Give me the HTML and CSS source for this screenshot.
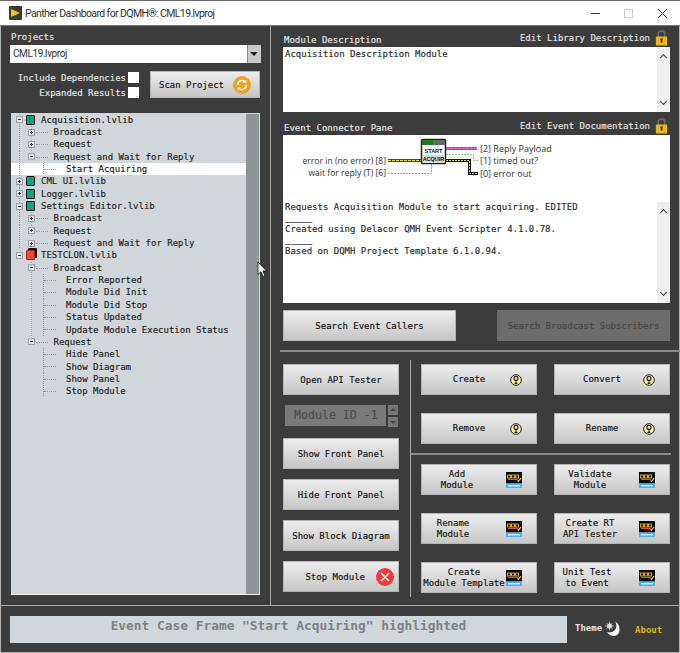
FILE: index.html
```html
<!DOCTYPE html>
<html lang="en">
<head>
  <meta charset="UTF-8">
  <title>Panther Dashboard for DQMH</title>
  <link rel="stylesheet" href="styles.css">
</head>
<body>

<svg class="defs">
  <symbol id="help" viewBox="0 0 12 12">
    <circle cx="6" cy="6" r="5.3" fill="#f3f0a8" stroke="#222" stroke-width="1"/>
    <circle cx="6" cy="4.4" r="2" fill="none" stroke="#222" stroke-width="1.1"/>
    <path d="M6 6.4V9.4M4.6 9.4H7.4" stroke="#222" stroke-width="1.1" fill="none"/>
  </symbol>
  <symbol id="dqmh" viewBox="0 0 16 16">
    <rect width="16" height="11.500" fill="#050505"/>
    <path d="M1.500 3H4.500V6H1.500ZM5.500 3H8.500V6H5.500ZM9.500 3H12.500V6H9.500Z" fill="none" stroke="#d9a520" stroke-width="1.100"/>
    <path d="M2 7.500H11L13 9.500" stroke="#e2502a" stroke-width="1.200" fill="none"/>
    <path d="M12 10L15 6" stroke="#f0d040" stroke-width="1.200"/>
    <rect y="11.500" width="16" height="4.500" fill="#4db0f0"/>
    <rect x="2" y="13" width="12" height="1.400" fill="#d8eefc"/>
  </symbol>
  <symbol id="lock" viewBox="0 0 13 18">
    <path d="M3 9V5.500a3.500 3.500 0 0 1 7 0V9" fill="none" stroke="#6f6f6f" stroke-width="1.600"/>
    <rect x="0.500" y="8" width="12" height="9.500" rx="1" fill="#e8b81c"/>
    <rect x="5.700" y="10.500" width="1.800" height="4" fill="#4a3a08"/>
    <circle cx="6.600" cy="11" r="1.300" fill="#4a3a08"/>
  </symbol>
</svg>

<div class="window">
  <div class="titlebar">
    <svg class="app-icon" width="13" height="14" viewBox="0 0 13 14">
      <rect width="13" height="14" rx="1" fill="#3a3a32"/>
      <path d="M2 3L11 7L2 11Z" fill="#f2c21a"/>
    </svg>
    <span class="title-text">Panther Dashboard for DQMH®: CML19.lvproj</span>
    <div class="win-controls">
      <svg width="11" height="11" viewBox="0 0 11 11"><path d="M0 5.500H9" stroke="#333"/></svg>
      <svg width="11" height="11" viewBox="0 0 11 11"><rect x="0.500" y="1.500" width="8" height="8" fill="none" stroke="#ccc"/></svg>
      <svg width="11" height="11" viewBox="0 0 11 11"><path d="M1 1L10 10M10 1L1 10" stroke="#333"/></svg>
    </div>
  </div>

  <div class="main">
    <!-- Left: project tree -->
    <div class="left-panel">
      <div class="projects-label">Projects</div>
      <div class="combo">
        <span class="combo-value">CML19.lvproj</span>
        <span class="combo-arrow"></span>
      </div>
      <div class="options">
        <div class="checks">
          <label class="check-row">Include Dependencies<span class="checkbox"></span></label>
          <label class="check-row">Expanded Results<span class="checkbox"></span></label>
        </div>
        <button class="btn scan-btn">
          <span>Scan Project</span>
          <svg width="18" height="18" viewBox="0 0 18 18">
            <circle cx="9" cy="9" r="9" fill="#f0a028"/>
            <path d="M4.600 9a4.400 4.400 0 0 1 7.600-3M13.400 9a4.400 4.400 0 0 1-7.600 3" fill="none" stroke="#fff" stroke-width="1.500"/>
            <path d="M13.200 3.600V6.800H10ZM4.800 14.400V11.200H8Z" fill="#fff"/>
          </svg>
        </button>
      </div>
      <div class="tree">
        <ul class="tree-list">
          <li class="row lv0 g0"><span class="exp minus"></span><span class="lib"></span>Acquisition.lvlib</li>
          <li class="row lv1 g0 g1"><span class="exp plus"></span>Broadcast</li>
          <li class="row lv1 g0 g1"><span class="exp plus"></span>Request</li>
          <li class="row lv1 g0"><span class="exp minus"></span>Request and Wait for Reply</li>
          <li class="row lv2 g0 g2 selected">Start Acquiring</li>
          <li class="row lv0 g0"><span class="exp plus"></span><span class="lib"></span>CML UI.lvlib</li>
          <li class="row lv0 g0"><span class="exp plus"></span><span class="lib"></span>Logger.lvlib</li>
          <li class="row lv0 g0"><span class="exp minus"></span><span class="lib"></span>Settings Editor.lvlib</li>
          <li class="row lv1 g0 g1"><span class="exp plus"></span>Broadcast</li>
          <li class="row lv1 g0 g1"><span class="exp plus"></span>Request</li>
          <li class="row lv1 g0"><span class="exp plus"></span>Request and Wait for Reply</li>
          <li class="row lv0"><span class="exp minus"></span><span class="lib lib-red"></span>TESTCLON.lvlib</li>
          <li class="row lv1 g1"><span class="exp minus"></span>Broadcast</li>
          <li class="row lv2 g1 g2">Error Reported</li>
          <li class="row lv2 g1 g2">Module Did Init</li>
          <li class="row lv2 g1 g2">Module Did Stop</li>
          <li class="row lv2 g1 g2">Status Updated</li>
          <li class="row lv2 g1 g2">Update Module Execution Status</li>
          <li class="row lv1"><span class="exp minus"></span>Request</li>
          <li class="row lv2 g2">Hide Panel</li>
          <li class="row lv2 g2">Show Diagram</li>
          <li class="row lv2 g2">Show Panel</li>
          <li class="row lv2 g2">Stop Module</li>
        </ul>
        <div class="tree-scroll"></div>
      </div>
    </div>

    <!-- Right: description, connector pane, tools -->
    <div class="right-panel">
      <div class="section-head head-first">
        <span class="section-title">Module Description</span>
        <span class="section-edit">Edit Library Description<svg class="lock" width="13" height="17"><use href="#lock"/></svg></span>
      </div>
      <div class="text-box desc-box">
        <div class="text-body desc-text">Acquisition Description Module</div>
        <div class="v-scroll"><span class="chev up"></span><span class="chev down"></span></div>
      </div>

      <div class="section-head head-second">
        <span class="section-title">Event Connector Pane</span>
        <span class="section-edit">Edit Event Documentation<svg class="lock" width="13" height="17"><use href="#lock"/></svg></span>
      </div>
      <div class="pane">
        <svg class="connector" width="387" height="67" viewBox="0 0 387 67">
          <g fill="none">
            <path d="M105 25.500H138" stroke="#4d4a00" stroke-width="3"/>
            <path d="M105 25.500H138" stroke="#e8d85a" stroke-dasharray="3 1"/>
            <path d="M105 38.500H148.500V28" stroke="#7cc47c" stroke-dasharray="2 1"/>
            <path d="M163 13.500H194" stroke="#ee22dd" stroke-width="3"/>
            <path d="M163 13.500H194" stroke="#ff66ee" stroke-dasharray="3 1"/>
            <path d="M163 19.500H190.500V25.500H195" stroke="#7cc47c" stroke-dasharray="2 1"/>
            <path d="M163 25.500H186.500V38.500H195" stroke="#111" stroke-width="3"/>
            <path d="M163 25.500H186.500V38.500H195" stroke="#e8d85a" stroke-dasharray="2 1"/>
          </g>
          <rect x="138.500" y="4.500" width="24" height="24" rx="1" fill="#fff" stroke="#222" stroke-width="1.500"/>
          <rect x="139" y="5" width="11" height="5" fill="#1f7a1f"/>
          <rect x="150" y="5" width="12" height="5" fill="#666"/>
          <rect x="140" y="20" width="21" height="8" fill="#d8d8d8"/>
          <text class="node-text" x="150.500" y="18">START</text>
          <text class="node-text" x="150.500" y="26">ACQUIR</text>
          <g class="conn-text">
            <text class="conn-left" x="103" y="28.500" text-anchor="end">error in (no error) [8]</text>
            <text class="conn-left" x="103" y="41" text-anchor="end">wait for reply (T) [6]</text>
            <text x="197" y="16.500">[2] Reply Payload</text>
            <text x="197" y="29">[1] timed out?</text>
            <text x="197" y="41.500">[0] error out</text>
          </g>
        </svg>
        <div class="doc-box">
          <div class="text-body">Requests Acquisition Module to start acquiring. EDITED
_____
Created using Delacor QMH Event Scripter 4.1.0.78.
_____
Based on DQMH Project Template 6.1.0.94.</div>
          <div class="v-scroll"><span class="chev up"></span><span class="chev down"></span></div>
        </div>
      </div>

      <div class="search-row">
        <button class="btn search-btn">Search Event Callers</button>
        <button class="btn search-btn disabled">Search Broadcast Subscribers</button>
      </div>
      <div class="hline hline-wide"></div>

      <div class="tools">
        <div class="tools-left">
          <button class="btn tool-btn">Open API Tester</button>
          <div class="module-id">
            <div class="module-field">Module ID -1</div>
            <div class="spinner"><span class="spin up"></span><span class="spin down"></span></div>
          </div>
          <button class="btn tool-btn">Show Front Panel</button>
          <button class="btn tool-btn">Hide Front Panel</button>
          <button class="btn tool-btn">Show Block Diagram</button>
          <button class="btn tool-btn stop-btn">
            <span>Stop Module</span>
            <svg width="18" height="18" viewBox="0 0 18 18">
              <circle cx="9" cy="9" r="9" fill="#ee3b3b"/>
              <path d="M5 5L13 13M13 5L5 13" stroke="#fff" stroke-width="1.600"/>
            </svg>
          </button>
        </div>
        <div class="vline"></div>
        <div class="tools-right">
          <div class="tool-grid">
            <button class="btn icon-btn"><span class="label help-label">Create</span><svg width="12" height="12"><use href="#help"/></svg></button>
            <button class="btn icon-btn"><span class="label help-label">Convert</span><svg width="12" height="12"><use href="#help"/></svg></button>
            <button class="btn icon-btn"><span class="label help-label">Remove</span><svg width="12" height="12"><use href="#help"/></svg></button>
            <button class="btn icon-btn"><span class="label help-label">Rename</span><svg width="12" height="12"><use href="#help"/></svg></button>
          </div>
          <div class="hline hline-tools"></div>
          <div class="tool-grid">
            <button class="btn icon-btn"><span class="label">Add<br>Module</span><svg width="16" height="16"><use href="#dqmh"/></svg></button>
            <button class="btn icon-btn"><span class="label">Validate<br>Module</span><svg width="16" height="16"><use href="#dqmh"/></svg></button>
            <button class="btn icon-btn"><span class="label label-narrow">Rename<br>Module</span><svg width="16" height="16"><use href="#dqmh"/></svg></button>
            <button class="btn icon-btn"><span class="label">Create RT<br>API Tester</span><svg width="16" height="16"><use href="#dqmh"/></svg></button>
            <button class="btn icon-btn"><span class="label label-wide">Create<br>Module Template</span><svg width="16" height="16"><use href="#dqmh"/></svg></button>
            <button class="btn icon-btn"><span class="label label-unit">Unit Test<br>to Event</span><svg width="16" height="16"><use href="#dqmh"/></svg></button>
          </div>
        </div>
      </div>
    </div>
  </div>

  <div class="footer">
    <div class="status">Event Case Frame "Start Acquiring" highlighted</div>
    <span class="theme">Theme</span>
    <svg class="moon" width="16" height="16" viewBox="0 0 16 16">
      <path d="M10 0.500C12 3 12 7 9.500 9.500C7.500 11.500 4.500 12 2 11C4 14.500 9 16.500 12.500 13.500C16 10.500 15 3 10 0.500Z" fill="#fff"/>
      <circle cx="4.500" cy="5" r="2.500" fill="#ddd"/>
      <path d="M4.500 0.500V9.500M0 5H9M1.500 2L7.500 8M7.500 2L1.500 8" stroke="#ddd" stroke-width="0.700"/>
    </svg>
    <span class="about">About</span>
  </div>

  <!-- mouse pointer caught in the capture -->
  <svg class="pointer" width="10" height="17" viewBox="0 0 10 17">
    <path d="M1 1V13.500L4 10.800L6 15.500L8 14.500L6 10H9.500Z" fill="#fff" stroke="#111" stroke-width="0.800"/>
  </svg>
</div>

</body>
</html>
```

FILE: styles.css
```css
* {
  box-sizing: border-box;
}

body {
  margin: 0;
  background-color: #3c3c3c;
  font-family: "DejaVu Sans Mono", monospace;
  font-size: 9px;
  color: #1c1c1c;
  -webkit-text-stroke: 0.15px;
}

.defs {
  display: none;
}

.window {
  position: relative;
  width: 680px;
  height: 653px;
  background-color: #3c3c3c;
  box-shadow: inset 1px 0 #b0b0b0, inset -1px 0 #b0b0b0, inset 0 -1px #b0b0b0;
  overflow: hidden;
}

/* Title bar */
.titlebar {
  display: flex;
  align-items: center;
  height: 26px;
  padding-left: 9px;
  background-color: #fff;
  border-top: 1px solid #666;
  border-bottom: 1px solid #777;
  -webkit-text-stroke: 0;
}

.title-text {
  margin-left: 3px;
  font-family: "Roboto", sans-serif;
  font-size: 10.500px;
  letter-spacing: -0.600px;
  color: #333;
}

.win-controls {
  display: flex;
  gap: 22px;
  margin-left: auto;
  margin-right: 12px;
}

/* Main split */
.main {
  display: flex;
  height: 580px;
  border-bottom: 1px solid #a8a8a8;
}

.left-panel {
  width: 271px;
  padding: 5px 9px 0 10px;
  border-right: 1px solid #a8a8a8;
}

.projects-label {
  height: 14px;
  color: #e6e6e6;
  line-height: 13px;
  padding-left: 1px;
}

.combo {
  display: flex;
  height: 18px;
  background-color: #fff;
  -webkit-text-stroke: 0;
}

.combo-value {
  flex: 1;
  padding-left: 3px;
  font-family: "Roboto", sans-serif;
  font-size: 10px;
  letter-spacing: -0.400px;
  line-height: 17px;
  color: #333;
}

.combo-arrow {
  position: relative;
  width: 14px;
  background-color: #c9c9c9;
  border-left: 1px solid #888;
}

.combo-arrow::after {
  content: "";
  position: absolute;
  top: 7px;
  left: 2px;
  border-left: 4px solid transparent;
  border-right: 4px solid transparent;
  border-top: 4px solid #222;
}

.options {
  display: flex;
  justify-content: space-between;
  margin-top: 8px;
}

.checks {
  display: flex;
  flex-direction: column;
  gap: 4px;
  width: 129px;
  padding-top: 1px;
}

.check-row {
  display: flex;
  justify-content: flex-end;
  align-items: center;
  gap: 2px;
  color: #e6e6e6;
}

.checkbox {
  width: 11px;
  height: 11px;
  background-color: #fff;
}

/* Buttons */
.btn {
  border: 1px solid #b5b5b5;
  padding: 0;
  background: linear-gradient(#ededed, #c6c6c6);
  font-family: "DejaVu Sans Mono", monospace;
  font-size: 9px;
  color: #111;
}

.scan-btn {
  display: flex;
  align-items: center;
  justify-content: space-between;
  width: 110px;
  height: 27px;
  margin-right: 1px;
  padding: 0 8px;
}

/* Tree */
.tree {
  display: flex;
  height: 482px;
  margin: 15px 1px 0;
  padding-right: 1px;
  background-color: #d0d6d9;
  border-bottom: 1px solid #eee;
}

.tree-list {
  flex: 1;
  margin: 0;
  padding: 0.500px 0 0;
  list-style: none;
}

.row {
  position: relative;
  display: flex;
  align-items: center;
  height: 12.350px;
  background-image: var(--g0, none), var(--g1, none), var(--g2, none);
  background-position: 8px 0, 20px 0, 32px 0;
  background-size: 1px 2px;
  background-repeat: repeat-y;
  white-space: nowrap;
}

.g0 {
  --g0: linear-gradient(#8f9599 50%, transparent 50%);
}

.g1 {
  --g1: linear-gradient(#a3a9ad 50%, transparent 50%);
}

.g2 {
  --g2: linear-gradient(#8f9599 50%, transparent 50%);
}

.lv0 {
  padding-left: 5px;
}

.lv1 {
  padding-left: 17px;
}

.lv2 {
  padding-left: 55px;
}

.lv1::before,
.lv2::before {
  content: "";
  position: absolute;
  top: 6px;
  width: 12px;
  border-top: 1px dotted #8f9599;
}

.lv1::before {
  left: 25px;
}

.lv2::before {
  left: 33px;
}

.selected {
  background-color: #fff;
}

.exp {
  position: relative;
  z-index: 1;
  width: 7px;
  height: 7px;
  border: 1px solid #9aa0a4;
  background: #e6eaec;
}

.exp::before,
.plus::after {
  content: "";
  position: absolute;
  background-color: #333;
}

.exp::before {
  top: 2px;
  left: 1px;
  width: 3px;
  height: 1px;
}

.plus::after {
  top: 1px;
  left: 2px;
  width: 1px;
  height: 3px;
}

.lv1 .exp {
  margin-right: 18.500px;
}

.lib {
  width: 9px;
  height: 10px;
  margin: 0 6px 0 3px;
  border: 1px solid #111;
  border-radius: 1px;
  background-color: #06a67e;
}

.lib-red {
  border-color: #a82020;
  background-color: #f24343;
  box-shadow: 2px -2px 0 0 #111;
}

.tree-scroll {
  width: 13px;
  margin-top: 1px;
  background-color: #8f9497;
}

/* Right side */
.right-panel {
  flex: 1;
  padding: 0 10px 0 12px;
}

.section-head {
  display: flex;
  justify-content: space-between;
  align-items: flex-end;
  color: #e6e6e6;
}

.head-first {
  height: 21px;
}

.head-second {
  height: 23px;
}

.section-title {
  margin-bottom: 1px;
  padding-left: 1px;
  line-height: 11px;
}

.section-edit {
  display: flex;
  align-items: center;
  gap: 5px;
  margin-right: 2px;
}

.lock {
  margin-bottom: 1px;
}

.text-box,
.doc-box {
  display: flex;
  background-color: #fff;
}

.desc-box {
  height: 65px;
}

.text-body {
  flex: 1;
  padding-left: 2px;
  line-height: 11px;
  white-space: pre-wrap;
  color: #2a2a2a;
}

.desc-text {
  padding-top: 2px;
}

.v-scroll {
  display: flex;
  flex-direction: column;
  justify-content: space-between;
  align-items: center;
  width: 13px;
  padding: 8px 0;
  background-color: #f0f0f0;
}

.chev {
  width: 5px;
  height: 5px;
  border-left: 1px solid #444;
  border-top: 1px solid #444;
}

.chev.up {
  transform: rotate(45deg);
}

.chev.down {
  transform: rotate(225deg);
}

.pane {
  display: flex;
  flex-direction: column;
  height: 168px;
  background-color: #fff;
}

.connector {
  display: block;
  flex: none;
}

.node-text {
  font-family: "Liberation Sans", sans-serif;
  font-size: 5.500px;
  font-weight: bold;
  text-anchor: middle;
  fill: #111;
  -webkit-text-stroke: 0;
}

.conn-text {
  font-family: "Open Sans", sans-serif;
  font-size: 9px;
  fill: #333;
  -webkit-text-stroke: 0;
}

.conn-left {
  font-size: 8.600px;
}

.doc-box {
  flex: 1;
}

.search-row {
  display: flex;
  justify-content: space-between;
  margin-top: 7px;
}

.search-btn {
  width: 173px;
  height: 31px;
}

.disabled {
  border-color: #6c6c6c;
  background: #6c6c6c;
  color: #474747;
}

.hline {
  height: 2px;
  background-color: #8c8c8c;
}

.hline-wide {
  margin: 9px -10px 0 -3px;
}

.tools {
  display: flex;
}

.tools-left {
  display: flex;
  flex-direction: column;
  gap: 10px;
  width: 116px;
  padding-top: 12px;
}

.tool-btn {
  flex: none;
  width: 116px;
  height: 31px;
}

.stop-btn {
  display: flex;
  align-items: center;
  justify-content: flex-end;
  gap: 11px;
  padding-right: 4px;
}

.module-id {
  display: flex;
  align-items: center;
  gap: 2px;
  height: 21px;
  margin-bottom: 2px;
  padding-left: 2px;
}

.module-field {
  width: 101px;
  height: 21px;
  padding-left: 9px;
  background-color: #7a7a7a;
  font-size: 11.600px;
  line-height: 20px;
  color: #4d4d4d;
}

.spinner {
  display: flex;
  flex-direction: column;
  gap: 2px;
}

.spin {
  position: relative;
  width: 10px;
  height: 10px;
  background-color: #767676;
}

.spin::after {
  content: "";
  position: absolute;
  left: 2px;
  border-left: 3px solid transparent;
  border-right: 3px solid transparent;
}

.spin.up::after {
  top: 3px;
  border-bottom: 3px solid #444;
}

.spin.down::after {
  top: 4px;
  border-top: 3px solid #444;
}

.vline {
  flex: none;
  width: 1px;
  height: 237px;
  margin: 8px 0 0 11px;
  background-color: #a8a8a8;
}

.tools-right {
  flex: 1;
  padding: 12px 0 0 10px;
}

.tool-grid {
  display: grid;
  grid-template-columns: 116px 116px;
  column-gap: 17px;
  row-gap: 18px;
}

.icon-btn {
  display: flex;
  align-items: center;
  justify-content: space-between;
  height: 31px;
  padding-right: 14px;
}

.label {
  width: 70px;
  line-height: 10.700px;
  text-align: center;
}

.help-label {
  width: 88px;
  padding-left: 6px;
}

.label-narrow {
  width: 62px;
}

.label-wide {
  width: 84px;
}

.label-unit {
  width: 64px;
}

.hline-tools {
  margin: 9px -1px 9px -10px;
}

/* Footer */
.footer {
  display: flex;
  align-items: center;
  height: 47px;
  padding: 0 0 1px 10px;
}

.status {
  width: 557px;
  height: 27px;
  background-color: #d0d6d9;
  font-size: 12.850px;
  font-weight: bold;
  line-height: 19px;
  text-align: center;
  color: #7d8285;
  -webkit-text-stroke: 0;
}

.theme {
  margin: -2px 0 0 8px;
  color: #e6e6e6;
  font-weight: bold;
  -webkit-text-stroke: 0;
}

.moon {
  margin-left: 3px;
}

.about {
  margin: 2px 0 0 14px;
  font-weight: bold;
  color: #d8b41a;
  -webkit-text-stroke: 0;
}

.pointer {
  position: absolute;
  top: 261px;
  left: 257px;
}
```
